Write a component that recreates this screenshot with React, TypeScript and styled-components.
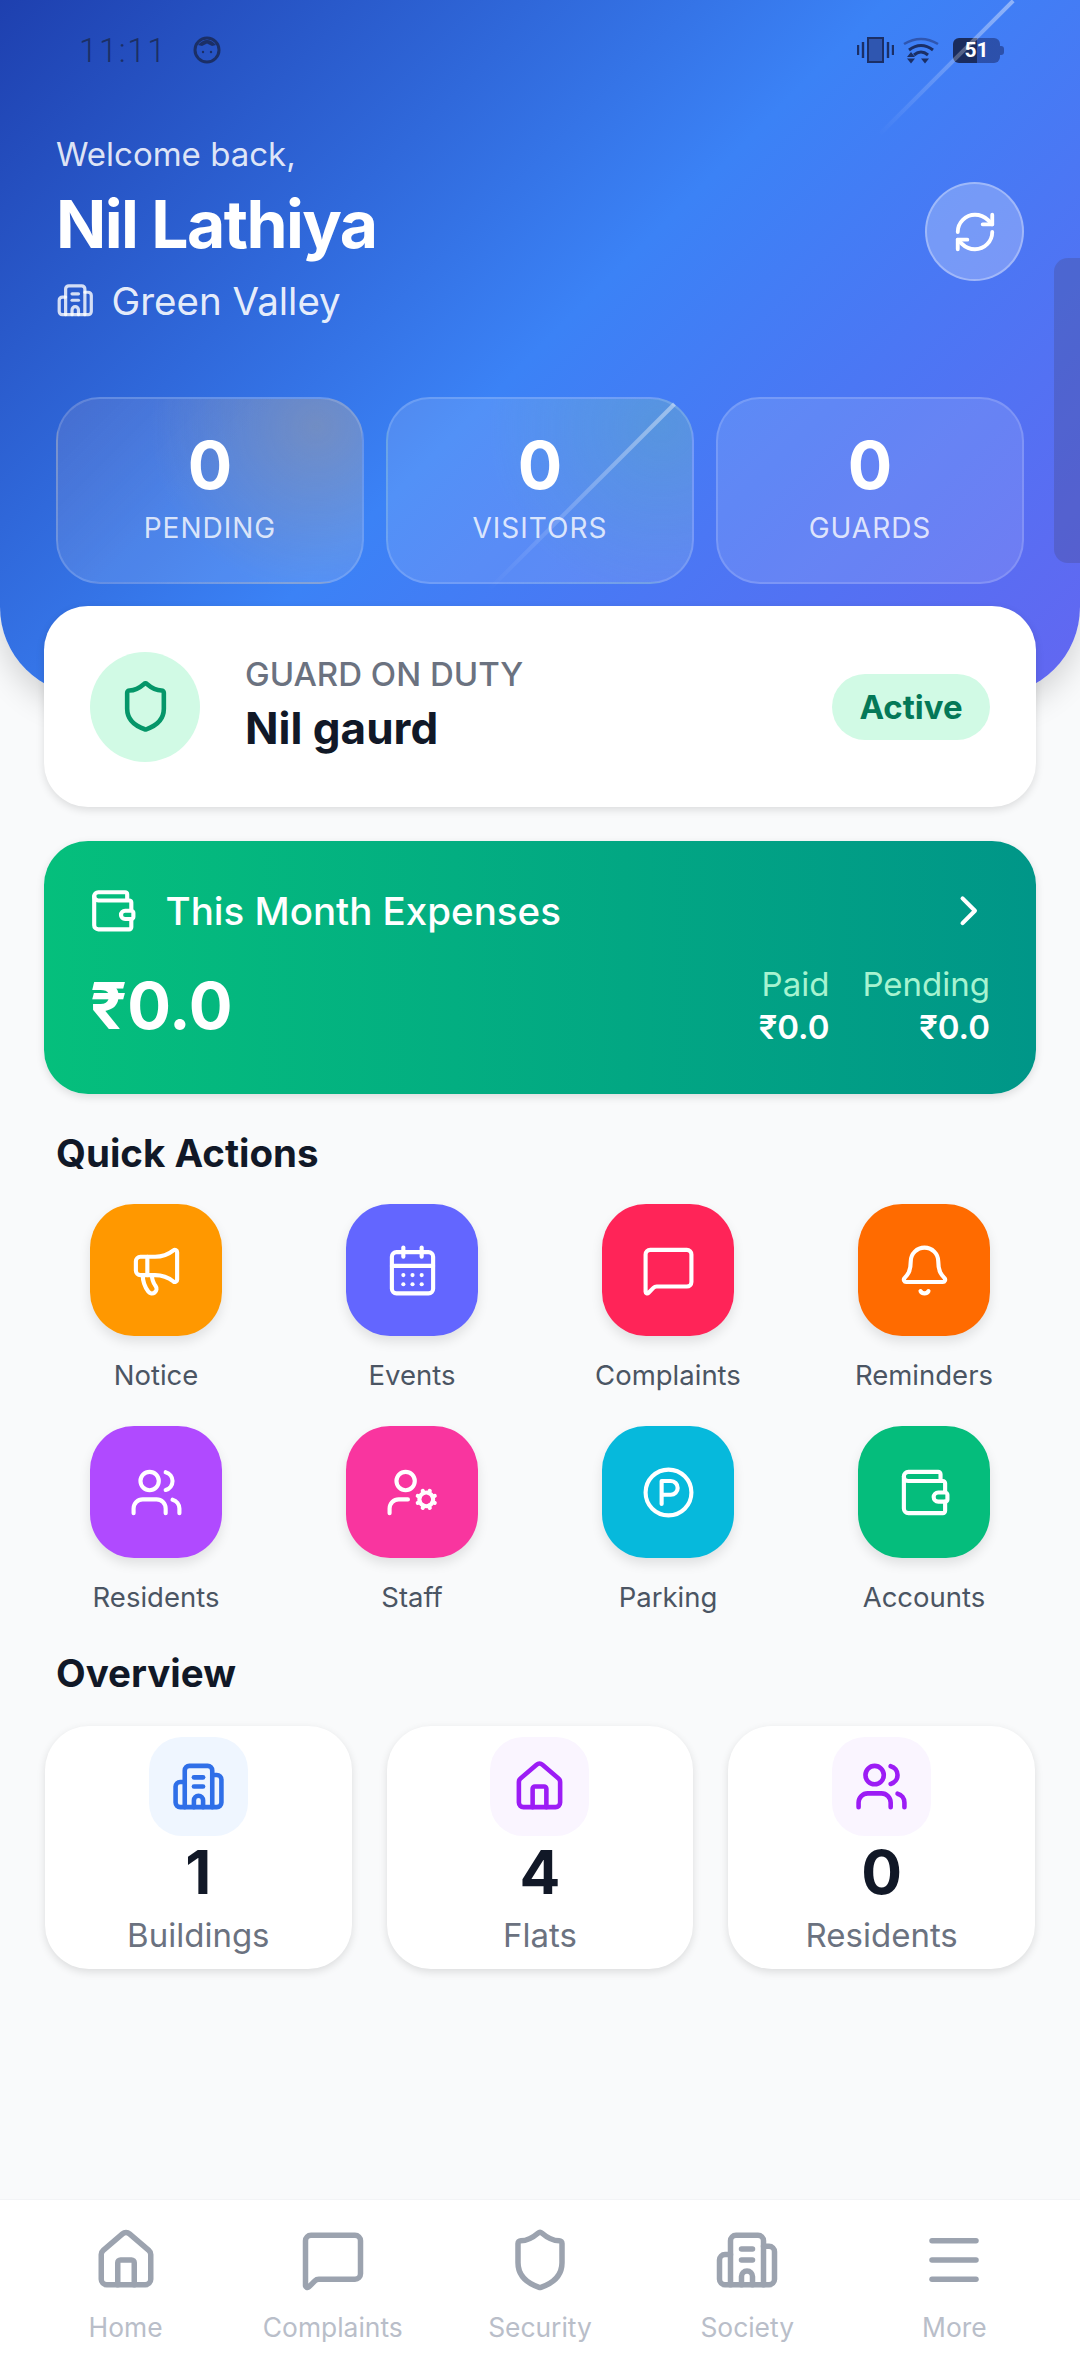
import React from "react";
import styled, { createGlobalStyle } from "styled-components";
import {
  Bell,
  Building2,
  CalendarDays,
  ChevronRight,
  CircleParking,
  House,
  LucideIcon,
  Megaphone,
  Menu,
  MessageSquare,
  RefreshCw,
  Shield,
  UserCog,
  Users,
  Wallet,
} from "lucide-react";

const Global = createGlobalStyle`
  html, body { margin: 0; padding: 0; background: #f9fafb; }
  body { font-family: Inter, "Noto Sans", sans-serif; overflow: hidden; }
  * { box-sizing: border-box; }
`;

const Page = styled.div`
  width: 1080px;
  height: 2376px;
  display: flex;
  flex-direction: column;
  background: #f9fafb;
  position: relative;
  overflow: hidden;
`;

const Main = styled.main`
  flex: 1;
  display: flex;
  flex-direction: column;
`;

const Header = styled.header`
  position: relative;
  height: 695px;
  display: flex;
  flex-direction: column;
  padding: 0 56px;
  background: linear-gradient(135deg, #1e40af 0%, #3b82f6 50%, #6366f1 100%);
  border-radius: 0 0 88px 88px;
  box-shadow: 0 12px 32px rgba(0, 0, 0, 0.16);
  overflow: hidden;
`;

const Streak = styled.div<{ $left: number; $top: number; $length: number }>`
  position: absolute;
  left: ${(p) => p.$left}px;
  top: ${(p) => p.$top}px;
  width: ${(p) => p.$length}px;
  height: 4px;
  transform: rotate(-45deg);
  background: linear-gradient(90deg, rgba(255, 255, 255, 0) 0%, rgba(255, 255, 255, 0.42) 100%);
  pointer-events: none;
`;

const ScrollEdge = styled.div`
  position: absolute;
  right: 0;
  top: 258px;
  width: 26px;
  height: 305px;
  border-radius: 14px 0 0 14px;
  background: rgba(70, 70, 120, 0.28);
  pointer-events: none;
`;

const StatusBar = styled.div`
  height: 100px;
  margin: 0 24px 0 23px;
  display: flex;
  align-items: center;
  justify-content: space-between;
  color: #1b2f66;
`;

const StatusGroup = styled.div<{ $gap: number }>`
  display: flex;
  align-items: center;
  gap: ${(p) => p.$gap}px;
`;

const Clock = styled.span`
  font-family: Roboto, sans-serif;
  font-size: 33px;
  letter-spacing: 1.6px;
  font-weight: 300;
  line-height: 1;
`;

const Battery = styled.span`
  position: relative;
  width: 47px;
  height: 25px;
  margin-left: 5px;
  border-radius: 6px;
  background: linear-gradient(90deg, #1a2c5e 0 51%, rgba(26, 44, 110, 0.55) 51% 100%);
  color: #fff;
  font-family: Roboto, sans-serif;
  font-size: 21px;
  font-weight: 700;
  line-height: 25px;
  text-align: center;
  &::after {
    content: "";
    position: absolute;
    right: -4px;
    top: 8px;
    width: 4px;
    height: 9px;
    border-radius: 0 3px 3px 0;
    background: rgba(26, 44, 110, 0.55);
  }
`;

const Greeting = styled.div`
  display: flex;
  align-items: center;
  justify-content: space-between;
  height: 257px;
  padding-top: 6px;
`;

const GreetingText = styled.div`
  display: flex;
  flex-direction: column;
  padding-bottom: 6px;
`;

const Welcome = styled.div`
  font-size: 33px;
  line-height: 44px;
  margin-bottom: 6px;
  color: rgba(255, 255, 255, 0.85);
`;

const Name = styled.h1`
  margin: 0;
  font-size: 66px;
  line-height: 84px;
  font-weight: 700;
  letter-spacing: -1.6px;
  color: #fff;
`;

const SocietyLine = styled.div`
  display: flex;
  align-items: center;
  gap: 17px;
  margin-top: 10px;
  font-size: 38.5px;
  line-height: 50px;
  color: rgba(255, 255, 255, 0.9);
  svg {
    color: rgba(255, 255, 255, 0.8);
  }
`;

const RefreshButton = styled.button`
  width: 99px;
  height: 99px;
  padding: 0;
  display: flex;
  align-items: center;
  justify-content: center;
  border-radius: 50%;
  border: 2px solid rgba(255, 255, 255, 0.3);
  background: rgba(255, 255, 255, 0.25);
  color: #fff;
`;

const StatRow = styled.div`
  display: grid;
  grid-template-columns: repeat(3, 1fr);
  gap: 22px;
  margin-top: 40px;
`;

const StatCard = styled.div<{ $glare: string }>`
  height: 187px;
  display: flex;
  flex-direction: column;
  align-items: center;
  border-radius: 44px;
  border: 2px solid rgba(255, 255, 255, 0.15);
  background: ${(p) => p.$glare}, rgba(255, 255, 255, 0.12);
`;

const StatValue = styled.div`
  margin-top: 26px;
  font-size: 66px;
  line-height: 80px;
  font-weight: 700;
  color: #fff;
`;

const StatLabel = styled.div`
  margin-top: 5px;
  font-size: 28px;
  line-height: 36px;
  letter-spacing: 1px;
  color: rgba(255, 255, 255, 0.8);
`;

const GuardCard = styled.section`
  position: relative;
  margin: -89px 44px 0;
  height: 201px;
  padding: 0 46px;
  display: flex;
  align-items: center;
  gap: 45px;
  background: #fff;
  border-radius: 44px;
  box-shadow: 0 3px 8px rgba(0, 0, 0, 0.12);
`;

const GuardBadge = styled.div`
  width: 110px;
  height: 110px;
  flex: none;
  display: flex;
  align-items: center;
  justify-content: center;
  border-radius: 50%;
  background: #d1fae5;
  color: #059669;
`;

const GuardText = styled.div`
  flex: 1;
  display: flex;
  flex-direction: column;
  padding-bottom: 6px;
`;

const GuardLabel = styled.div`
  font-size: 33px;
  line-height: 42px;
  font-weight: 500;
  color: #6b7280;
`;

const GuardName = styled.div`
  margin-top: 6px;
  font-size: 44px;
  line-height: 54px;
  font-weight: 700;
  color: #111827;
`;

const ActivePill = styled.div`
  width: 158px;
  height: 66px;
  display: flex;
  align-items: center;
  justify-content: center;
  border-radius: 33px;
  background: #d1fae5;
  color: #047857;
  font-size: 33px;
  font-weight: 700;
`;

const ExpenseCard = styled.section`
  margin: 34px 44px 0;
  height: 253px;
  padding: 45px 46px 0;
  display: flex;
  flex-direction: column;
  border-radius: 44px;
  background: linear-gradient(90deg, #05bf7c 0%, #009688 100%);
  box-shadow: 0 3px 8px rgba(0, 0, 0, 0.12);
  color: #fff;
`;

const ExpenseHead = styled.div`
  display: flex;
  align-items: center;
  gap: 28px;
  height: 50px;
  font-size: 38.5px;
  font-weight: 500;
  svg:first-child {
    margin-left: -2px;
  }
  svg:last-child {
    margin-left: auto;
    margin-right: -3px;
  }
`;

const ExpenseBody = styled.div`
  margin-top: 25px;
  display: flex;
  align-items: center;
  justify-content: space-between;
`;

const ExpenseTotal = styled.div`
  font-size: 65px;
  line-height: 90px;
  font-weight: 700;
`;

const ExpenseSplit = styled.div`
  display: flex;
  gap: 33px;
`;

const SplitColumn = styled.div`
  display: flex;
  flex-direction: column;
  align-items: flex-end;
`;

const SplitLabel = styled.div`
  font-size: 33px;
  line-height: 42px;
  color: #a7f3d0;
`;

const SplitValue = styled.div`
  font-size: 33px;
  line-height: 44px;
  font-weight: 600;
`;

const SectionTitle = styled.h2`
  margin: 36px 56px 0;
  height: 46px;
  font-size: 38.5px;
  line-height: 46px;
  font-weight: 700;
  color: #111827;
`;

const ActionGrid = styled.div`
  margin-top: 28px;
  padding: 0 28px;
  display: grid;
  grid-template-columns: repeat(4, 1fr);
  row-gap: 34px;
`;

const ActionItem = styled.div`
  display: flex;
  flex-direction: column;
  align-items: center;
`;

const ActionTile = styled.div<{ $color: string }>`
  width: 132px;
  height: 132px;
  display: flex;
  align-items: center;
  justify-content: center;
  border-radius: 44px;
  background: ${(p) => p.$color};
  color: #fff;
  box-shadow: 0 6px 12px rgba(0, 0, 0, 0.1);
`;

const ActionLabel = styled.div`
  margin-top: 22px;
  font-size: 27.5px;
  line-height: 34px;
  font-weight: 400;
  color: #4b5563;
`;

const OverviewGrid = styled.div`
  margin: 30px 45px 0;
  display: grid;
  grid-template-columns: repeat(3, 1fr);
  gap: 35px;
`;

const OverviewCard = styled.div`
  height: 243px;
  padding-top: 11px;
  display: flex;
  flex-direction: column;
  align-items: center;
  background: #fff;
  border-radius: 44px;
  box-shadow: 0 3px 8px rgba(0, 0, 0, 0.12);
`;

const OverviewIcon = styled.div<{ $bg: string; $fg: string }>`
  width: 99px;
  height: 99px;
  display: flex;
  align-items: center;
  justify-content: center;
  border-radius: 33px;
  background: ${(p) => p.$bg};
  color: ${(p) => p.$fg};
`;

const OverviewValue = styled.div`
  font-size: 60.5px;
  line-height: 72px;
  font-weight: 700;
  color: #111827;
`;

const OverviewLabel = styled.div`
  margin-top: 5px;
  font-size: 33px;
  line-height: 44px;
  color: #6b7280;
`;

const BottomNav = styled.nav`
  height: 177px;
  padding: 27px 22px 0;
  display: grid;
  grid-template-columns: repeat(5, 1fr);
  background: #fff;
  border-top: 1px solid #f3f4f6;
`;

const NavItem = styled.div`
  display: flex;
  flex-direction: column;
  align-items: center;
  color: #9ca3af;
`;

const NavLabel = styled.div`
  margin-top: 16px;
  font-size: 26.4px;
  line-height: 36px;
  color: #b9bec9;
`;

const actions: { label: string; color: string; icon: LucideIcon }[] = [
  { label: "Notice", color: "#ff9800", icon: Megaphone },
  { label: "Events", color: "#6366ff", icon: CalendarDays },
  { label: "Complaints", color: "#ff2458", icon: MessageSquare },
  { label: "Reminders", color: "#ff6b00", icon: Bell },
  { label: "Residents", color: "#b04aff", icon: Users },
  { label: "Staff", color: "#f9359f", icon: UserCog },
  { label: "Parking", color: "#06b9dc", icon: CircleParking },
  { label: "Accounts", color: "#05bd7c", icon: Wallet },
];

const stats = [
  {
    label: "PENDING",
    glare: "radial-gradient(circle at 85% 15%, rgba(170, 150, 130, 0.38) 0%, rgba(170, 150, 130, 0) 55%), linear-gradient(135deg, rgba(60, 70, 160, 0.16) 0%, rgba(60, 70, 160, 0) 45%)",
  },
  {
    label: "VISITORS",
    glare: "radial-gradient(circle at 90% 15%, rgba(80, 170, 170, 0.3) 0%, rgba(80, 170, 170, 0) 55%)",
  },
  { label: "GUARDS", glare: "linear-gradient(0deg, rgba(255, 255, 255, 0), rgba(255, 255, 255, 0))" },
];

const overview = [
  { label: "Buildings", value: "1", bg: "#eff6ff", fg: "#2f6fe8", icon: Building2 },
  { label: "Flats", value: "4", bg: "#faf5ff", fg: "#9c1cf5", icon: House },
  { label: "Residents", value: "0", bg: "#faf5ff", fg: "#9c1cf5", icon: Users },
];

const navItems: { label: string; icon: LucideIcon }[] = [
  { label: "Home", icon: House },
  { label: "Complaints", icon: MessageSquare },
  { label: "Security", icon: Shield },
  { label: "Society", icon: Building2 },
  { label: "More", icon: Menu },
];

const AvatarGlyph = () => (
  <svg width="30" height="30" viewBox="0 0 30 30" fill="none">
    <circle cx="15" cy="15" r="12" stroke="#1b2f66" strokeWidth="3" />
    <path d="M6 10 Q15 0 24 10 L20 11 L15 8.5 L10 11 Z" fill="#1b2f66" />
    <circle cx="11" cy="17" r="1.2" fill="#1b2f66" />
    <circle cx="19" cy="17" r="1.2" fill="#1b2f66" />
  </svg>
);

const VibrateGlyph = () => (
  <svg width="37" height="26" viewBox="0 0 37 26" fill="none">
    <rect x="11" y="1" width="15" height="24" fill="#2f56b0" stroke="#1b2f66" strokeWidth="2" />
    <path d="M1 8v10M6 5v16M31 5v16M36 8v10" stroke="#1b2f66" strokeWidth="2.4" />
  </svg>
);

const WifiGlyph = () => (
  <svg width="36" height="28" viewBox="0 0 36 28" fill="none">
    <path d="M1 8 Q18 -2 35 8" stroke="#2f56b0" strokeWidth="2.6" />
    <path d="M6 14 Q18 5 30 14" stroke="#1b2f66" strokeWidth="3" />
    <path d="M11 19 Q18 13 25 19" stroke="#1b2f66" strokeWidth="3" />
    <path d="M4 21h8l-4-5zM4 22.5h8l-4 5zM18 22.5h8l-4 5z" fill="#1b2f66" />
  </svg>
);

export default function App() {
  return (
    <Page>
      <Global />
      <Main>
        <Header>
          <StatusBar>
            <StatusGroup $gap={25}>
              <Clock>11:11</Clock>
              <AvatarGlyph />
            </StatusGroup>
            <StatusGroup $gap={9}>
              <VibrateGlyph />
              <WifiGlyph />
              <Battery>51</Battery>
            </StatusGroup>
          </StatusBar>
          <Greeting>
            <GreetingText>
              <Welcome>Welcome back,</Welcome>
              <Name>Nil Lathiya</Name>
              <SocietyLine>
                <Building2 size={38.5} />
                Green Valley
              </SocietyLine>
            </GreetingText>
            <RefreshButton aria-label="Refresh">
              <RefreshCw size={46} />
            </RefreshButton>
          </Greeting>
          <StatRow>
            {stats.map((s) => (
              <StatCard key={s.label} $glare={s.glare}>
                <StatValue>0</StatValue>
                <StatLabel>{s.label}</StatLabel>
              </StatCard>
            ))}
          </StatRow>
          <Streak $left={851} $top={66} $length={190} />
          <Streak $left={450} $top={495} $length={263} />
          <ScrollEdge />
        </Header>

        <GuardCard>
          <GuardBadge>
            <Shield size={55} />
          </GuardBadge>
          <GuardText>
            <GuardLabel>GUARD ON DUTY</GuardLabel>
            <GuardName>Nil gaurd</GuardName>
          </GuardText>
          <ActivePill>Active</ActivePill>
        </GuardCard>

        <ExpenseCard>
          <ExpenseHead>
            <Wallet size={49.5} />
            This Month Expenses
            <ChevronRight size={49.5} />
          </ExpenseHead>
          <ExpenseBody>
            <ExpenseTotal>₹0.0</ExpenseTotal>
            <ExpenseSplit>
              <SplitColumn>
                <SplitLabel>Paid</SplitLabel>
                <SplitValue>₹0.0</SplitValue>
              </SplitColumn>
              <SplitColumn>
                <SplitLabel>Pending</SplitLabel>
                <SplitValue>₹0.0</SplitValue>
              </SplitColumn>
            </ExpenseSplit>
          </ExpenseBody>
        </ExpenseCard>

        <SectionTitle>Quick Actions</SectionTitle>
        <ActionGrid>
          {actions.map((a) => (
            <ActionItem key={a.label}>
              <ActionTile $color={a.color}>
                <a.icon size={55} strokeWidth={1.8} />
              </ActionTile>
              <ActionLabel>{a.label}</ActionLabel>
            </ActionItem>
          ))}
        </ActionGrid>

        <SectionTitle>Overview</SectionTitle>
        <OverviewGrid>
          {overview.map((o) => (
            <OverviewCard key={o.label}>
              <OverviewIcon $bg={o.bg} $fg={o.fg}>
                <o.icon size={55} />
              </OverviewIcon>
              <OverviewValue>{o.value}</OverviewValue>
              <OverviewLabel>{o.label}</OverviewLabel>
            </OverviewCard>
          ))}
        </OverviewGrid>
      </Main>
      <BottomNav>
        {navItems.map((n) => (
          <NavItem key={n.label}>
            <n.icon size={66} />
            <NavLabel>{n.label}</NavLabel>
          </NavItem>
        ))}
      </BottomNav>
    </Page>
  );
}
